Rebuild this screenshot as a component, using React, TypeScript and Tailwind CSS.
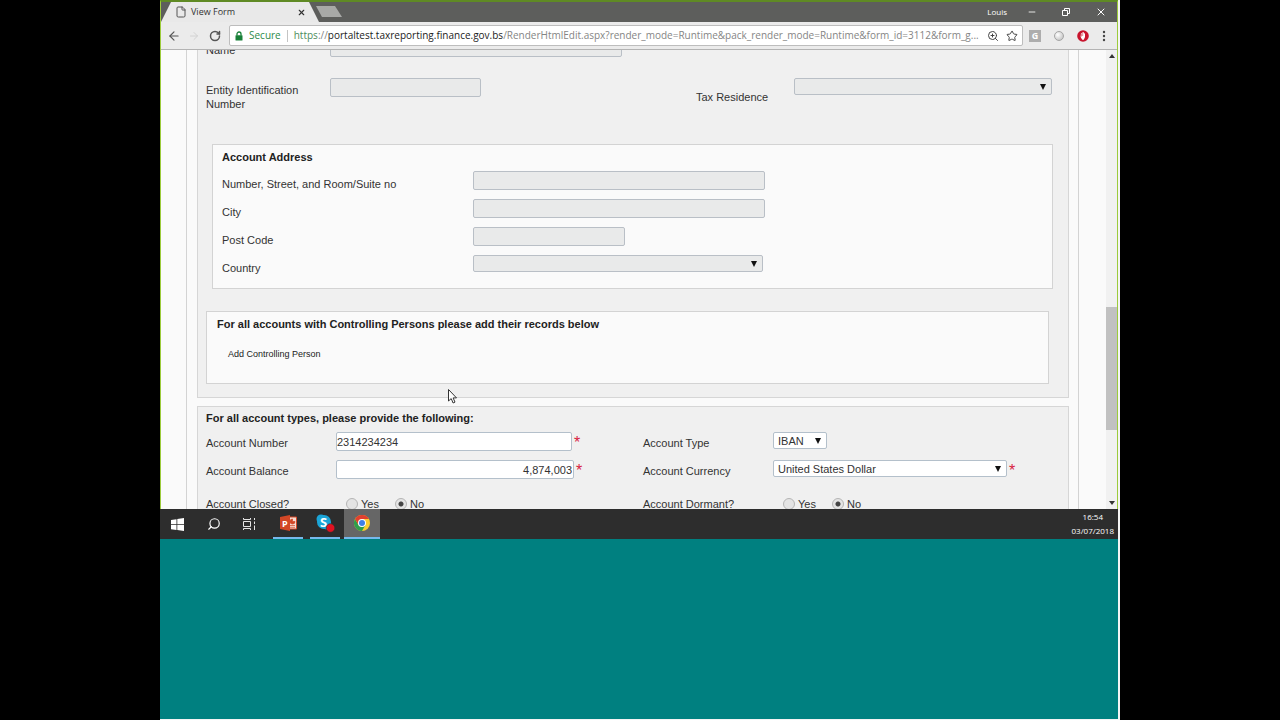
import type { ReactNode } from "react";
import { ArrowLeft, ArrowRight, File, Minus, RotateCw, Search, Star, X, ZoomIn } from "lucide-react";

const fieldClass = "h-[19px] rounded-[2px] border text-[11px] leading-4 text-[#333] outline-none";
const disabledField = "border-[#b9bfc6] bg-[#e9eaea]";
const activeField = "border-[#b4c0cb] bg-white";

function SelectBox({ id, value, width, disabled }: { id: string; value: string; width: string; disabled?: boolean }) {
  return (
    <div className={`relative ${width}`}>
      <select
        id={id}
        disabled={disabled}
        defaultValue={value}
        className={`block h-[17px] w-full appearance-none rounded-[2px] border pl-1 text-[11px] leading-[14px] text-[#333] opacity-100 ${disabled ? disabledField : activeField}`}
      >
        <option value={value}>{value}</option>
      </select>
      <svg viewBox="0 0 6 6" className="pointer-events-none absolute top-[6px] right-[6px] size-[6px]">
        <path d="M0 0h6L3 6z" fill="#111" />
      </svg>
    </div>
  );
}

function AddressRow({ id, label, children }: { id: string; label: string; children: ReactNode }) {
  return (
    <div className="flex h-7 items-start">
      <label htmlFor={id} className="w-[251px] leading-[27px]">{label}</label>
      {children}
    </div>
  );
}

function Required() {
  return <span className="ml-[2px] text-base leading-[22px] text-[#d8233f]">*</span>;
}

function YesNo({ name }: { name: string }) {
  return (
    <div className="ml-[10px] flex gap-4">
      {["Yes", "No"].map((option) => (
        <label key={option} className="flex items-center gap-[3px]">
          <input
            type="radio"
            name={name}
            defaultChecked={option === "No"}
            className="size-3 appearance-none rounded-full border border-[#b5b5b5] bg-[#e4e4e4] checked:bg-[radial-gradient(circle,#444_0_2px,#e4e4e4_3px)]"
          />
          {option}
        </label>
      ))}
    </div>
  );
}

function TabStrip() {
  return (
    <div className="flex h-5 items-stretch bg-[#5d5e5c] text-white">
      <div className="flex w-[158px] items-center bg-[#e9e9e9] pr-[13px] pl-[14px] text-[#333] [clip-path:polygon(10px_0,148px_0,100%_100%,0_100%)]">
        <File className="size-3 text-[#555]" strokeWidth={2} />
        <span className="ml-1 flex-1 text-[9px]">View Form</span>
        <button aria-label="Close tab"><X className="size-[9px]" strokeWidth={3} /></button>
      </div>
      <button aria-label="New tab" className="mt-1 -ml-[3px] h-[11px] w-[26px] bg-[#a8a9a7] [clip-path:polygon(0_0,19px_0,100%_100%,6px_100%)]" />
      <div className="ml-auto flex items-center pr-[10px]">
        <span className="mr-5 text-[8px]">Louis</span>
        <button aria-label="Minimize" className="mr-6"><Minus className="size-[10px]" /></button>
        <button aria-label="Restore" className="mr-6">
          <svg viewBox="0 0 10 10" className="size-[10px]" fill="none" stroke="currentColor">
            <path d="M1.5 3.5h5v5h-5zM3.5 3.5v-2h5v5h-2" />
          </svg>
        </button>
        <button aria-label="Close"><X className="size-3" /></button>
      </div>
    </div>
  );
}

function Toolbar() {
  return (
    <div className="flex h-7 items-center border-b border-[#b3b3b3] bg-[#ebebeb] pr-[11px] pl-[6px] text-[#555]">
      <button aria-label="Back"><ArrowLeft className="size-[14px]" strokeWidth={2} /></button>
      <button aria-label="Forward" className="ml-[7px] text-[#d2d2d2]"><ArrowRight className="size-3" /></button>
      <button aria-label="Reload" className="ml-[9px]"><RotateCw className="size-3" strokeWidth={3} /></button>
      <div className="ml-2 flex h-[21px] min-w-0 flex-1 items-center rounded-[2px] border border-[#bdbdbd] bg-white pr-1 pl-[5px] text-[10px]">
        <svg viewBox="0 0 8 10" className="h-[10px] w-2">
          <path d="M2 4.500V3a2 2 0 0 1 4 0v1.500" fill="none" stroke="#188038" strokeWidth="1.300" />
          <rect x=".5" y="4.300" width="7" height="5.200" rx=".5" fill="#188038" />
        </svg>
        <span className="ml-[6px] text-[#2d8a4a]">Secure</span>
        <span className="mx-[6px] h-3 w-px bg-[#c4c4c4]" />
        <span className="min-w-0 flex-1 whitespace-nowrap text-[#858585]">
          <span className="text-[#4c8c5c]">https</span>://<span className="text-[#222]">portaltest.taxreporting.finance.gov.bs</span>/RenderHtmlEdit.aspx?render_mode=Runtime&amp;pack_render_mode=Runtime&amp;form_id=3112&amp;form_g...
        </span>
        <button aria-label="Zoom"><ZoomIn className="size-3 text-[#444]" strokeWidth={2} /></button>
        <button aria-label="Bookmark" className="ml-[7px]"><Star className="size-3 text-[#444]" strokeWidth={2} /></button>
      </div>
      <div className="ml-[6px] flex items-center gap-[13px]">
        <span className="flex size-3 items-center justify-center bg-[#adadad] text-[9px] leading-3 font-bold text-white">G</span>
        <span className="size-[10px] rounded-full border border-[#a5a5a5] bg-[radial-gradient(circle_at_35%_35%,#fff,#b8b8b8)]" />
        <svg viewBox="0 0 12 12" className="size-3">
          <circle cx="6" cy="6" r="5.800" fill="#c8142d" />
          <path d="M4 3.200l1 .3V2.200h2v1.300l1-.3V7L6.800 9.800H5.200L3.600 7z" fill="#fff" />
          <path d="M5.700 2v4M4.500 4v2.500" stroke="#c8142d" strokeWidth=".5" />
        </svg>
        <button aria-label="Menu">
          <svg viewBox="0 0 4 12" className="h-3 w-1" fill="#444">
            <circle cx="2" cy="2" r="1.200" />
            <circle cx="2" cy="6" r="1.200" />
            <circle cx="2" cy="10" r="1.200" />
          </svg>
        </button>
      </div>
    </div>
  );
}

function Taskbar() {
  return (
    <footer className="flex h-[30px] items-stretch bg-[#2d2d2d] pl-[11px] text-white">
      <button aria-label="Start" className="mr-[23px]">
        <svg viewBox="0 0 13 13" className="size-[13px]">
          <path d="M0 2l5.500-.8v5H0zM6.300 1.100L13 0v6.200H6.300zM0 7h5.500v5L0 11.200zM6.300 7H13v6l-6.700-1z" fill="#fff" />
        </svg>
      </button>
      <button aria-label="Search" className="mr-[21px]"><Search className="size-[14px] -scale-x-100" strokeWidth={2} /></button>
      <button aria-label="Task View" className="mr-[17px]">
        <svg viewBox="0 0 14 14" className="size-[14px]" fill="none" stroke="#e6e6e6">
          <path d="M1.500 1v1.500h7V1M1.500 4.500h7v5h-7zM1.500 13v-1.500h7V13M12.500 1v2M12.500 4.500v2.500M12.500 8.500V13" />
        </svg>
      </button>
      <button aria-label="PowerPoint" className="flex w-[30px] items-center justify-center border-b-2 border-[#76b9ed]">
        <svg viewBox="0 0 17 16" className="h-4 w-[17px]">
          <path d="M8 2h8.500v12H8z" fill="#f6dcd3" stroke="#d24726" />
          <path d="M12.500 4a2.500 2.500 0 1 0 2.500 2.500h-2.500zM10 10.500h5M10 12.300h5" fill="#d24726" stroke="#d24726" strokeWidth=".7" />
          <path d="M0 2l10-2v16L0 14z" fill="#d24726" />
          <text x="2" y="11.500" fontSize="9" fontWeight="700" fill="#fff">P</text>
        </svg>
      </button>
      <button aria-label="Skype" className="ml-[7px] flex w-[30px] items-center justify-center border-b-2 border-[#76b9ed]">
        <svg viewBox="0 0 19 19" className="size-[19px]">
          <circle cx="5" cy="5" r="4.500" fill="#1ba5d8" />
          <circle cx="11" cy="11" r="4.500" fill="#1ba5d8" />
          <circle cx="8" cy="8" r="7" fill="#1ba5d8" />
          <text x="4" y="12.500" fontSize="13" fontWeight="700" fill="#fff">S</text>
          <circle cx="14.500" cy="14" r="4.300" fill="#e01222" stroke="#2d2d2d" strokeWidth=".6" />
        </svg>
      </button>
      <button aria-label="Chrome" className="ml-1 flex w-9 items-center justify-center border-b-2 border-[#76b9ed] bg-[#666]">
        <svg viewBox="0 0 48 48" className="size-4">
          <circle cx="24" cy="24" r="24" fill="#fccd30" />
          <path d="M24 24L34.400 30 24 48A24 24 0 0 1 3.200 12L13.600 30z" fill="#2f9e4c" />
          <path d="M13.600 30L3.200 12A24 24 0 0 1 44.800 12H24z" fill="#e0402f" />
          <circle cx="24" cy="24" r="12" fill="#fff" />
          <circle cx="24" cy="24" r="9" fill="#3f7fe8" />
        </svg>
      </button>
      <div className="ml-auto flex flex-col items-center justify-center pr-1 text-[8px] leading-[14px]">
        <span>16:54</span>
        <span>03/07/2018</span>
      </div>
    </footer>
  );
}

function EntityForm() {
  return (
    <form className="-mt-[13px] mr-[27px] ml-[25px] border-x border-[#d3d3d3] pr-[9px] pl-[10px] text-[11px] text-[#333]">
      <section className="border border-[#d6d6d6] bg-[#f0f0f0] pb-[13px]">
        <div className="flex h-10 items-start pl-2">
          <label htmlFor="name" className="w-[124px] leading-[24px]">Name</label>
          <input id="name" disabled className={`w-[292px] ${fieldClass} ${disabledField}`} />
        </div>
        <div className="flex items-start pr-4 pl-2">
          <label htmlFor="entity-number" className="mt-[5px] w-[124px] leading-[14px]">Entity Identification<br />Number</label>
          <input id="entity-number" disabled className={`w-[151px] ${fieldClass} ${disabledField}`} />
          <label htmlFor="tax-residence" className="mt-3 ml-auto w-[98px] leading-[14px]">Tax Residence</label>
          <SelectBox id="tax-residence" value="" width="w-[258px]" disabled />
        </div>

        <fieldset className="mt-[33px] mr-[15px] ml-[14px] border border-[#d3d3d3] bg-[#fafafa] pb-[5px] pl-[9px]">
          <h2 className="pt-1 pb-[6px] leading-4 font-bold text-[#222]">Account Address</h2>
          <AddressRow id="street" label="Number, Street, and Room/Suite no">
            <input id="street" disabled className={`w-[292px] ${fieldClass} ${disabledField}`} />
          </AddressRow>
          <AddressRow id="city" label="City">
            <input id="city" disabled className={`w-[292px] ${fieldClass} ${disabledField}`} />
          </AddressRow>
          <AddressRow id="post-code" label="Post Code">
            <input id="post-code" disabled className={`w-[152px] ${fieldClass} ${disabledField}`} />
          </AddressRow>
          <AddressRow id="country" label="Country">
            <SelectBox id="country" value="" width="w-[290px]" disabled />
          </AddressRow>
        </fieldset>

        <div className="mt-[22px] mr-[19px] ml-2 border border-[#d3d3d3] bg-[#fafafa] pb-[21px] pl-[10px]">
          <h2 className="pt-1 leading-4 font-bold text-[#222]">For all accounts with Controlling Persons please add their records below</h2>
          <button type="button" className="mt-[14px] ml-[5px] block px-[6px] text-[9px] leading-4 text-[#222]">Add Controlling Person</button>
        </div>
      </section>

      <section className="mt-2 border border-[#d6d6d6] bg-[#f0f0f0] pb-10 pl-2">
        <h2 className="pt-[3px] pb-[6px] leading-4 font-bold text-[#222]">For all account types, please provide the following:</h2>
        <div className="grid grid-cols-2 gap-x-3">
          <div className="flex h-7 items-start">
            <label htmlFor="account-number" className="w-[130px] leading-[22px]">Account Number</label>
            <input id="account-number" defaultValue="2314234234" className={`w-[236px] ${fieldClass} ${activeField}`} />
            <Required />
          </div>
          <div className="flex h-7 items-start">
            <label htmlFor="account-type" className="w-[130px] leading-[22px]">Account Type</label>
            <SelectBox id="account-type" value="IBAN" width="w-[54px]" />
          </div>
          <div className="flex h-7 items-start">
            <label htmlFor="account-balance" className="w-[130px] leading-[22px]">Account Balance</label>
            <input id="account-balance" defaultValue="4,874,003" className={`w-[238px] pr-px text-right ${fieldClass} ${activeField}`} />
            <Required />
          </div>
          <div className="flex h-7 items-start">
            <label htmlFor="account-currency" className="w-[130px] leading-[22px]">Account Currency</label>
            <SelectBox id="account-currency" value="United States Dollar" width="w-[234px]" />
            <Required />
          </div>
          <div className="flex h-8 items-center">
            <span className="w-[130px]">Account Closed?</span>
            <YesNo name="account-closed" />
          </div>
          <div className="flex h-8 items-center">
            <span className="w-[130px]">Account Dormant?</span>
            <YesNo name="account-dormant" />
          </div>
        </div>
      </section>
    </form>
  );
}

export default function App() {
  return (
    <div className="h-screen bg-black px-40">
      <div className="flex h-full flex-col border-r-2 border-b border-[#f4f4f4] bg-[#008080] font-['Open_Sans',sans-serif]">
        <div className="flex min-h-0 flex-1 flex-col border-x border-t-2 border-x-[#9ccb3b] border-t-[#5f8a24]">
          <TabStrip />
          <Toolbar />
          <div className="relative flex min-h-0 flex-1 bg-[#fafafa]">
            <main className="min-w-0 flex-1 overflow-hidden font-['Liberation_Sans',Arial,sans-serif]">
              <EntityForm />
            </main>
            <div className="flex w-[11px] flex-col items-center justify-between bg-[#f1f1f1] py-1">
              <svg viewBox="0 0 6 4" className="h-1 w-[6px]"><path d="M0 4h6L3 0z" fill="#333" /></svg>
              <div className="mt-[249px] mb-auto h-[123px] w-full bg-[#c1c1c1]" />
              <svg viewBox="0 0 6 4" className="h-1 w-[6px]"><path d="M0 0h6L3 4z" fill="#333" /></svg>
            </div>
            <svg viewBox="0 0 9 15" className="pointer-events-none absolute top-[339px] left-[287px] h-[15px] w-[9px]">
              <path d="M.5.5v11.500l2.700-2.400 1.900 4.400 1.900-.9-1.900-4.200h3.400z" fill="#fff" stroke="#333" />
            </svg>
          </div>
        </div>
        <Taskbar />
        <div className="h-[180px] shrink-0" />
      </div>
    </div>
  );
}
